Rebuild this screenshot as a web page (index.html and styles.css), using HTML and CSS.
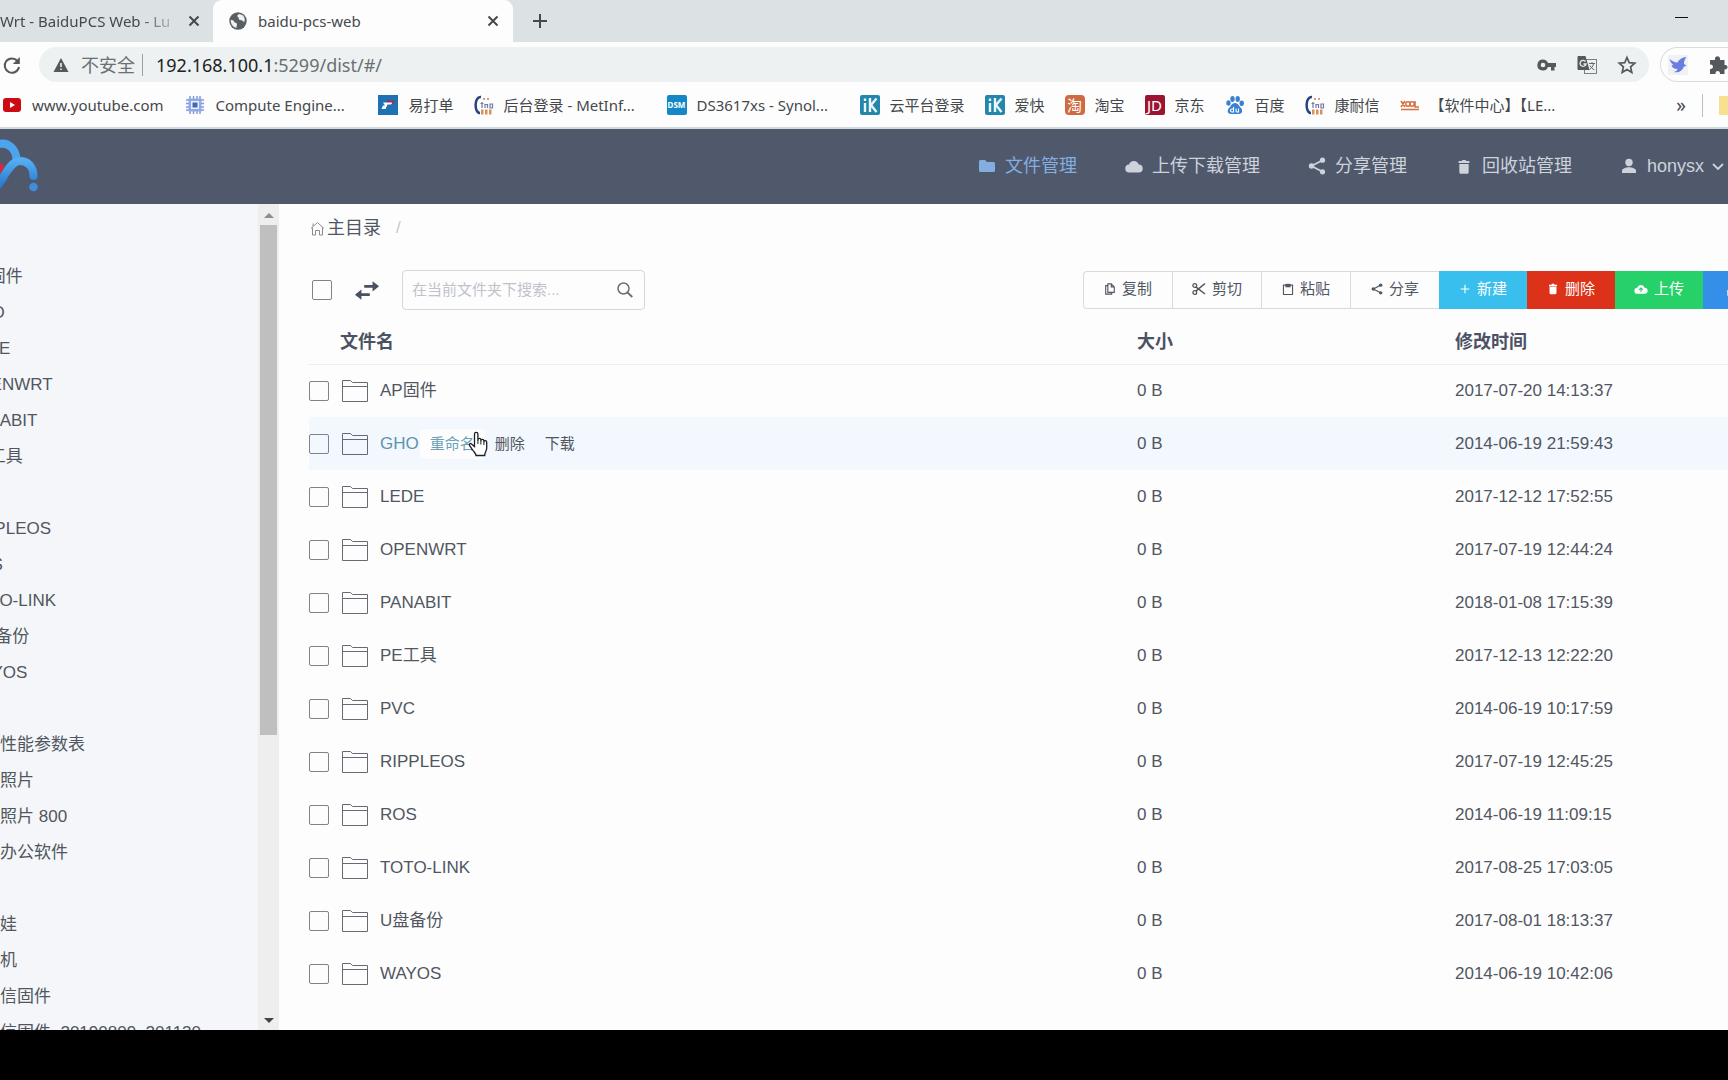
FILE: index.html
```html
<!DOCTYPE html>
<html lang="zh-CN">
<head>
<meta charset="utf-8">
<title>baidu-pcs-web</title>
<link rel="stylesheet" href="styles.css">
</head>
<body>
<svg class="sprite" aria-hidden="true">
  <symbol id="i-close" viewBox="0 0 12 12"><path d="M1.500 1.500l9 9M10.500 1.500l-9 9" stroke="currentColor" stroke-width="2" fill="none"/></symbol>
  <symbol id="i-folder-line" viewBox="0 0 28 24"><path d="M1.500 22.500V1.500h8l2 2h15v19zM1.500 7.500h25" fill="none" stroke="#666b73" stroke-width="1"/></symbol>
  <symbol id="i-share" viewBox="0 0 18 18"><path d="M15 3L3.500 9L15 15" stroke="currentColor" stroke-width="1.800" fill="none"/><circle cx="14.500" cy="3.200" r="2.600" fill="currentColor"/><circle cx="3.500" cy="9" r="2.700" fill="currentColor"/><circle cx="14.500" cy="14.800" r="2.600" fill="currentColor"/></symbol>
  <symbol id="i-trash" viewBox="0 0 18 18"><path d="M3 2.500h3.500l1-1.200h3l1 1.200H15v2.200H3zM3.800 5.700h10.400v9.300a1.700 1.700 0 0 1-1.700 1.700h-7a1.700 1.700 0 0 1-1.700-1.700z" fill="currentColor"/></symbol>
  <symbol id="i-c" viewBox="0 0 20 20"><path d="M7 2C0 1 0 18 6 18" fill="none" stroke="#27447e" stroke-width="2.500"/><path d="M6.500 8.500h3M8 7v6M11 13V9.500h2.500V13M16 9v4h2.500V9z" fill="none" stroke="#707ba6" stroke-width="1.200"/><path d="M7 14.500h2.500v5H7zM11 14.500h2.500v5H11zM15 14.500h2.500v5H15z" fill="#d7925c"/><circle cx="10" cy="4" r="1" fill="#d77a48"/><circle cx="14" cy="4" r="1" fill="#d77a48"/></symbol>
  <symbol id="i-ik" viewBox="0 0 20 20"><rect width="20" height="20" rx="2" fill="#2486ab"/><path d="M5 8v9M5 3.500v2.500M10 3v14M16.500 3.500L11 10l5.500 7" fill="none" stroke="#e9f7fb" stroke-width="2.400"/></symbol>
</svg>

<div class="browser">
  <div class="tabs">
    <div class="tab tab-back"><span class="tab-title">Wrt - BaiduPCS Web - Lu</span><button aria-label="关闭标签页"><svg width="12" height="12"><use href="#i-close"/></svg></button></div>
    <div class="tab tab-active">
      <svg width="18" height="18" viewBox="0 0 18 18"><circle cx="9" cy="9" r="8.700" fill="#5a5e63"/><path d="M1.800 8c3 0 3 1 3.500 2s2.700.500 2.700 2.300c0 1.500-.7 2-.5 3.600C4 15.500 1.500 12 1.800 8zM10 2c-2 1.600-2.400 2-1 3 1.500 1 0 2.500 2 3s3.200.500 4 2.500c1.800-3 .5-8-5-8.500z" fill="#eef1f2"/></svg>
      <span class="tab-title">baidu-pcs-web</span><button aria-label="关闭标签页"><svg width="12" height="12"><use href="#i-close"/></svg></button>
    </div>
    <button class="new-tab" aria-label="新标签页"><svg width="16" height="16" viewBox="0 0 16 16"><path d="M8 1v14M1 8h14" stroke="#45494d" stroke-width="2"/></svg></button>
    <button class="minimize" aria-label="最小化"></button>
  </div>

  <div class="toolbar">
    <button class="reload" aria-label="重新加载"><svg width="20" height="20" viewBox="0 0 20 20"><path d="M15.500 6A7.200 7.200 0 1 0 17 12" fill="none" stroke="#55595d" stroke-width="2"/><path d="M17.800 2v7h-7z" fill="#55595d"/></svg></button>
    <div class="address">
      <svg width="16" height="16" viewBox="0 0 16 16"><path d="M8 1l7.500 14H.5z" fill="#55595d"/><path d="M7.200 6h1.600v4H7.200zM7.200 11.500h1.600V13H7.200z" fill="#edf1f2"/></svg>
      <span class="insecure">不安全</span>
      <span class="url"><b>192.168.100.1</b>:5299/dist/#/</span>
      <svg class="key" width="20" height="20" viewBox="0 0 20 20"><path d="M6 4.500a5.500 5.500 0 1 0 5 7.500h3v3.500h3.500V12H19V8h-8a5.500 5.500 0 0 0-5-3.500zm0 3.200a2.300 2.300 0 1 1 0 4.600 2.300 2.300 0 0 1 0-4.600z" fill="#55595d"/></svg>
      <svg width="20" height="20" viewBox="0 0 20 20"><rect x="7.500" y="4.500" width="12" height="14" fill="none" stroke="#7b7f82"/><path d="M1.500 1h7l4 14h-11a1 1 0 0 1-1-1V2a1 1 0 0 1 1-1z" fill="#55595d"/><path d="M8.500 6.500A3 3 0 1 0 9 9H6.500" fill="none" stroke="#edf1f2" stroke-width="1.300"/><path d="M12 8.500h6M15 7v1.500M16.500 8.500c-.5 3-2 4.500-4 6M13 10.500c1 2 2.500 3.500 4.500 4.500" fill="none" stroke="#666a6e"/></svg>
      <svg width="20" height="20" viewBox="0 0 20 20"><path d="M10 2.500l2.200 5.200 5.600.5-4.200 3.700 1.200 5.500L10 14.500l-4.800 2.900 1.200-5.500-4.200-3.700 5.600-.5z" fill="none" stroke="#55595d" stroke-width="1.700"/></svg>
    </div>
    <div class="extensions">
      <svg width="20" height="20" viewBox="0 0 20 20"><rect width="20" height="20" fill="#f0f1f5"/><path d="M1.500 4c3 2.500 5 3.300 8 3.500C11 4 14 2.500 18.500 2 16.500 4.500 16 6.500 16 9l2.500 1.500L15.500 12c-1 4-5 6-9.500 5 2-.7 3.200-1.600 3.500-3C6 14 4 12.500 3.500 10l2 .2C3.500 8.500 2 6.500 1.500 4z" fill="#6c7de0"/></svg>
      <svg width="20" height="20" viewBox="0 0 20 20"><path d="M2 5h5c-1-5 6-5 5 0h4.500v5c4-1 4 5 0 4.500V19h-4.500c.5-4-5-4-4.500 0H2v-5c4 .5 4-5 0-4.500z" fill="#55595d"/></svg>
    </div>
  </div>

  <nav class="bookmarks" aria-label="书签">
    <a href="#"><svg width="20" height="20" viewBox="0 0 20 20"><rect x="1" y="3" width="18" height="14" rx="3" fill="#cb0a12"/><path d="M8 7l5 3-5 3z" fill="#fff"/></svg>www.youtube.com</a>
    <a href="#" class="long"><svg width="20" height="20" viewBox="0 0 20 20"><path d="M5 1v18M8.500 1v18M12 1v18M15 1v18M1 5h18M1 8.500h18M1 12h18M1 15h18" stroke="#7f95d6" stroke-width="1.400"/><rect x="3.500" y="3.500" width="13" height="13" fill="#8fa9ea"/><rect x="6" y="6" width="8" height="8" fill="#e8effc"/><rect x="7.500" y="7.500" width="5" height="5" fill="#4868a8"/></svg>Compute Engine...</a>
    <a href="#"><svg width="20" height="20" viewBox="0 0 20 20"><rect width="20" height="20" fill="#1e72b4"/><path d="M8 5.500h9l-2 4h-4z" fill="#9c2a50"/><path d="M5 7.500h9.500L13 9.500H9.500L7.500 14H3.500l1.500-3.500H7z" fill="#fff"/></svg>易打单</a>
    <a href="#" class="long"><svg width="20" height="20"><use href="#i-c"/></svg>后台登录 - MetInf...</a>
    <a href="#" class="long"><span class="badge dsm">DSM</span>DS3617xs - Synol...</a>
    <a href="#"><svg width="20" height="20"><use href="#i-ik"/></svg>云平台登录</a>
    <a href="#"><svg width="20" height="20"><use href="#i-ik"/></svg>爱快</a>
    <a href="#"><span class="badge tao">淘</span>淘宝</a>
    <a href="#"><span class="badge jd">JD</span>京东</a>
    <a href="#"><svg width="20" height="20" viewBox="0 0 20 20" fill="#3a80d2"><ellipse cx="3.500" cy="8" rx="2.200" ry="2.800"/><ellipse cx="7.500" cy="4" rx="2.200" ry="2.900"/><ellipse cx="12.700" cy="4" rx="2.200" ry="2.900"/><ellipse cx="16.700" cy="8.300" rx="2.200" ry="2.800"/><path d="M10 8c3 0 4 3 6 5 2.500 3 .5 6-2 6H6c-3 0-4.500-3-2-6 2-2 3-5 6-5z"/><path d="M8.500 12v5H7a1.500 1.500 0 0 1 0-3h1.500M11 13.500V16q0 1 1 1h1.500v-3.500" fill="none" stroke="#fff" stroke-width="1.100"/></svg>百度</a>
    <a href="#"><svg width="20" height="20"><use href="#i-c"/></svg>康耐信</a>
    <a href="#"><svg width="20" height="20" viewBox="0 0 20 20"><path d="M1 6l4 6M5 6l-4 6M15 6v6h4M1 14.500h18" fill="none" stroke="#d5703f" stroke-width="1.600" /><circle cx="8" cy="9" r="2.200" fill="none" stroke="#d5703f" stroke-width="1.500"/><circle cx="12" cy="9" r="2.200" fill="none" stroke="#d5703f" stroke-width="1.500"/></svg>【软件中心】【LE...</a>
    <button class="more" aria-label="更多书签">»</button>
    <span class="other"></span>
  </nav>

  <header class="header">
    <svg class="logo" width="40" height="60" viewBox="0 0 40 60">
      <defs><linearGradient id="g" x1="0" y1="0" x2="0" y2="1"><stop offset="0" stop-color="#52adf2"/><stop offset="1" stop-color="#2b79d0"/></linearGradient></defs>
      <path d="M0 28l5 3-5 8z" fill="#d02a45"/>
      <path d="M-3 9.500C8 6 17 14 16.500 27" fill="none" stroke="#4da4ee" stroke-width="8"/>
      <path d="M-3 51C3 46 9 26 20 26c8 0 13.500 6 13.500 15" fill="none" stroke="url(#g)" stroke-width="8" stroke-linecap="round"/>
      <circle cx="33.500" cy="52" r="4.300" fill="#3f8ddc"/>
    </svg>
    <nav class="menu">
      <a href="#" class="current"><svg width="18" height="18" viewBox="0 0 18 18"><path d="M1 4.500a1.500 1.500 0 0 1 1.500-1.500H7l2 2h6.500A1.500 1.500 0 0 1 17 6.500v7a1.500 1.500 0 0 1-1.500 1.500h-13A1.500 1.500 0 0 1 1 13.500z" fill="currentColor"/></svg>文件管理</a>
      <a href="#"><svg width="18" height="18" viewBox="0 0 18 18"><path d="M4.500 15.500a4 4 0 0 1-.4-8 5 5 0 0 1 9.600 0 4 4 0 0 1 0 8z" fill="currentColor"/></svg>上传下载管理</a>
      <a href="#"><svg width="18" height="18"><use href="#i-share"/></svg>分享管理</a>
      <a href="#"><svg width="18" height="18" viewBox="-1 -2 20 20"><use href="#i-trash" width="18" height="18"/></svg>回收站管理</a>
      <a href="#"><svg width="18" height="18" viewBox="0 0 18 18"><circle cx="9" cy="5.500" r="3.700" fill="currentColor"/><path d="M2 16v-2.500c0-2 4-3.300 7-3.300s7 1.300 7 3.300V16z" fill="currentColor"/></svg><span class="user">honysx</span><svg class="caret" width="12" height="12" viewBox="0 0 12 12"><path d="M1 4l5 5 5-5" fill="none" stroke="currentColor" stroke-width="1.800"/></svg></a>
    </nav>
  </header>

  <div class="content">
    <aside class="sidebar">
      <ul class="tree">
        <li>AP固件</li><li>GHO</li><li>LEDE</li><li>OPENWRT</li><li>PANABIT</li><li>PE工具</li><li></li><li>RIPPLEOS</li><li>ROS</li><li>TOTO-LINK</li><li>U盘备份</li><li>WAYOS</li><li></li>
        <li class="inner">性能参数表</li><li class="inner">照片</li><li class="inner">照片 800</li><li class="inner">办公软件</li><li></li><li class="inner">娃</li><li class="inner">机</li><li class="inner">信固件</li><li class="inner">信固件_20190809_201130</li>
      </ul>
      <div class="scrollbar"><i class="up"></i><i class="thumb"></i><i class="down"></i></div>
    </aside>

    <main class="main">
      <div class="crumbs"><a href="#"><svg width="15" height="15" viewBox="0 0 15 15"><path d="M1 7.500L7.500 1.500 14 7.500M2.500 6.500v7.500h3V9.500h4V14h3V6.500M3 5V2.500" fill="none" stroke="#888d94"/></svg>主目录</a><span>/</span></div>
      <div class="actions">
        <input type="checkbox" aria-label="全选">
        <svg class="swap" width="26" height="19" viewBox="0 0 28 20"><path d="M11 4h9V0l7 5.500-7 5.500V7h-9zM17 13H8V9l-7 5.500L8 20v-4h9z" fill="#495060"/></svg>
        <div class="search"><input type="text" placeholder="在当前文件夹下搜索..." aria-label="搜索"><svg width="16" height="16" viewBox="0 0 16 16"><circle cx="6.500" cy="6.500" r="5.500" fill="none" stroke="#6b7078" stroke-width="1.500"/><path d="M10.500 10.500l4.800 4.500" stroke="#6b7078" stroke-width="1.800"/></svg></div>
        <div class="group">
          <button class="plain"><svg width="12" height="12" viewBox="0 0 14 14"><path d="M4.500 1h4l3.500 3.500V11H4.500zM8.500 1v3.500H12M4.500 3H2v10h7v-2" fill="none" stroke="currentColor" stroke-width="1.300"/></svg>复制</button>
          <button class="plain"><svg width="14" height="14" viewBox="0 0 14 14"><path d="M3.800 4.800L13 12M3.800 9.200L13 1.500" stroke="currentColor" stroke-width="1.500"/><circle cx="2.800" cy="3.500" r="1.900" fill="none" stroke="currentColor" stroke-width="1.300"/><circle cx="2.800" cy="10.500" r="1.900" fill="none" stroke="currentColor" stroke-width="1.300"/></svg>剪切</button>
          <button class="plain"><svg width="12" height="12" viewBox="0 0 14 14"><path d="M1.700 2.500h10.600v11H1.700z" fill="none" stroke="currentColor" stroke-width="1.300"/><path d="M4 1h6v4H4z" fill="currentColor"/></svg>粘贴</button>
          <button class="plain"><svg width="12" height="12"><use href="#i-share"/></svg>分享</button>
          <button class="new"><svg width="12" height="12" viewBox="0 0 14 14"><path d="M7 2v10M2 7h10" stroke="currentColor" stroke-width="1.300"/></svg>新建</button>
          <button class="delete"><svg width="12" height="12"><use href="#i-trash"/></svg>删除</button>
          <button class="upload"><svg width="14" height="12" viewBox="0 0 16 14"><path d="M4 12.500a3.500 3.500 0 0 1-.4-7 4.500 4.500 0 0 1 8.600 0 3.500 3.500 0 0 1 0 7z" fill="currentColor"/><path d="M8 10.500V6M5.800 8L8 5.800 10.200 8" fill="none" stroke="#27ce68" stroke-width="1.300"/></svg>上传</button>
          <button class="download" aria-label="下载"><svg width="40" height="14" viewBox="0 0 40 14"><path d="M7 1v8M4 6l3 3 3-3M1 8v5h12V8" fill="none" stroke="currentColor" stroke-width="1.300"/></svg></button>
        </div>
      </div>

      <table class="files">
        <colgroup><col><col class="c-size"><col class="c-time"></colgroup>
        <thead><tr><th class="name-head">文件名</th><th>大小</th><th>修改时间</th></tr></thead>
        <tbody>
          <tr><td><div class="file"><input type="checkbox" aria-label="AP固件"><svg width="28" height="24"><use href="#i-folder-line"/></svg><a href="#">AP固件</a></div></td><td>0 B</td><td>2017-07-20 14:13:37</td></tr>
          <tr class="hover"><td><div class="file"><input type="checkbox" aria-label="GHO"><svg width="28" height="24"><use href="#i-folder-line"/></svg><a href="#">GHO</a><div class="row-actions"><button class="active">重命名<svg class="cursor" width="20" height="26" viewBox="0 0 20 26"><path d="M6.500 15.500V3a1.700 1.700 0 0 1 3.400 0v6.500V8.800a1.500 1.500 0 0 1 3 0v1.400-.4a1.500 1.500 0 0 1 3 0v1.500-.3a1.400 1.400 0 0 1 2.800 0V17c0 3-2 4-2 7.500H8c0-2-2-3.500-3.300-5.500L1.500 14.500c-.8-1.500.8-2.600 2-1.500z" fill="#fff" stroke="#1d2024" stroke-width="1.300"/><path d="M9.900 9v4M12.900 10v3.500M15.900 11v3" stroke="#1d2024"/></svg></button><button>删除</button><button>下载</button></div></div></td><td>0 B</td><td>2014-06-19 21:59:43</td></tr>
          <tr><td><div class="file"><input type="checkbox" aria-label="LEDE"><svg width="28" height="24"><use href="#i-folder-line"/></svg><a href="#">LEDE</a></div></td><td>0 B</td><td>2017-12-12 17:52:55</td></tr>
          <tr><td><div class="file"><input type="checkbox" aria-label="OPENWRT"><svg width="28" height="24"><use href="#i-folder-line"/></svg><a href="#">OPENWRT</a></div></td><td>0 B</td><td>2017-07-19 12:44:24</td></tr>
          <tr><td><div class="file"><input type="checkbox" aria-label="PANABIT"><svg width="28" height="24"><use href="#i-folder-line"/></svg><a href="#">PANABIT</a></div></td><td>0 B</td><td>2018-01-08 17:15:39</td></tr>
          <tr><td><div class="file"><input type="checkbox" aria-label="PE工具"><svg width="28" height="24"><use href="#i-folder-line"/></svg><a href="#">PE工具</a></div></td><td>0 B</td><td>2017-12-13 12:22:20</td></tr>
          <tr><td><div class="file"><input type="checkbox" aria-label="PVC"><svg width="28" height="24"><use href="#i-folder-line"/></svg><a href="#">PVC</a></div></td><td>0 B</td><td>2014-06-19 10:17:59</td></tr>
          <tr><td><div class="file"><input type="checkbox" aria-label="RIPPLEOS"><svg width="28" height="24"><use href="#i-folder-line"/></svg><a href="#">RIPPLEOS</a></div></td><td>0 B</td><td>2017-07-19 12:45:25</td></tr>
          <tr><td><div class="file"><input type="checkbox" aria-label="ROS"><svg width="28" height="24"><use href="#i-folder-line"/></svg><a href="#">ROS</a></div></td><td>0 B</td><td>2014-06-19 11:09:15</td></tr>
          <tr><td><div class="file"><input type="checkbox" aria-label="TOTO-LINK"><svg width="28" height="24"><use href="#i-folder-line"/></svg><a href="#">TOTO-LINK</a></div></td><td>0 B</td><td>2017-08-25 17:03:05</td></tr>
          <tr><td><div class="file"><input type="checkbox" aria-label="U盘备份"><svg width="28" height="24"><use href="#i-folder-line"/></svg><a href="#">U盘备份</a></div></td><td>0 B</td><td>2017-08-01 18:13:37</td></tr>
          <tr><td><div class="file"><input type="checkbox" aria-label="WAYOS"><svg width="28" height="24"><use href="#i-folder-line"/></svg><a href="#">WAYOS</a></div></td><td>0 B</td><td>2014-06-19 10:42:06</td></tr>
        </tbody>
      </table>
    </main>
  </div>
</div>
</body>
</html>
```
FILE: styles.css
```css
* { box-sizing: border-box; }
body {
  margin: 0;
  height: 100vh;
  padding-bottom: 50px;
  overflow: hidden;
  background: #000;
  color: #51565f;
  font: 17px/24px "Liberation Sans", "Noto Sans CJK SC", sans-serif;
}
a { color: inherit; text-decoration: none; }
button { margin: 0; padding: 0; border: 0; background: none; color: inherit; font: inherit; }
svg { display: block; flex: none; }
.sprite { position: absolute; width: 0; height: 0; }

.browser { display: flex; flex-direction: column; height: 100%; background: #fdfdfe; }
.tabs, .toolbar, .bookmarks { flex: none; display: flex; align-items: center; font-family: "Noto Sans", "Noto Sans CJK SC", sans-serif; }

/* tab strip */
.tabs { height: 42px; background: #dce1e4; color: #45494d; font-size: 15px; }
.tab { display: flex; align-items: center; height: 42px; }
.tab-title { flex: 1; overflow: hidden; white-space: nowrap; }
.tab-back { width: 213px; padding-right: 13px; gap: 8px; }
.tab-back .tab-title { mask-image: linear-gradient(to right, #000 140px, transparent 182px); }
.tab-active { width: 300px; padding: 0 14px 0 16px; gap: 11px; background: #fdfdfe; border-radius: 9px 9px 0 0; }
.new-tab { margin-left: 19px; }
.minimize { width: 13px; height: 1px; margin: 0 40px 7px auto; background: #111; }

/* address row */
.toolbar { height: 45px; }
.reload { width: 39px; padding-left: 2px; }
.address { flex: 1; display: flex; align-items: center; height: 35px; padding: 0 12px 0 14px; border-radius: 18px; background: #edf1f2; font-size: 18px; }
.insecure { margin-left: 12px; padding-right: 7px; border-right: 1px solid #9da1a4; line-height: 22px; color: #6b6f73; }
.url { flex: 1; margin-left: 13px; font-size: 18px; color: #6b6f73; }
.url b { font-weight: 400; color: #222; }
.address svg + svg { margin-left: 20px; }
.extensions { display: flex; align-items: center; gap: 20px; height: 35px; margin-left: 11px; padding-left: 7px; border: 1px solid #d9dcde; border-right: 0; border-radius: 18px 0 0 18px; }

/* bookmarks */
.bookmarks { height: 42px; padding: 0 0 4px 2px; gap: 20px; border-bottom: 2px solid #d3dadf; font-size: 15px; color: #45484b; overflow: hidden; }
.bookmarks a { flex: none; display: flex; align-items: center; gap: 10px; white-space: nowrap; }
.bookmarks a:first-child { margin-right: 2px; }
.bookmarks .long { width: 173px; }
.badge { width: 20px; height: 20px; border-radius: 2px; color: #fff; text-align: center; line-height: 20px; }
.dsm { background: #1488c6; font-size: 8px; font-weight: 700; }
.tao { background: #cf6a42; font-size: 15px; border-radius: 4px; }
.jd { background: #9c1431; font-size: 15px; }
.more { margin-left: auto; font-size: 19px; }
.other { width: 26px; height: 23px; margin-left: -4px; border-left: 1px solid #b9bec2; background: linear-gradient(#f7e08e, #f7e08e) right / 9px 19px no-repeat; }

/* application header */
.header { flex: none; display: flex; justify-content: space-between; height: 75px; background: #50596c; }
.logo { margin-top: 6px; }
.menu { display: flex; gap: 48px; padding: 25px 4px 26px 0; font-size: 18px; color: #cdd2db; }
.menu a { display: flex; align-items: center; gap: 9px; }
.menu .current { color: #84aee0; }
.menu .caret { margin-left: -1px; }

.content { flex: 1; display: flex; min-height: 0; }

/* folder tree */
.sidebar { flex: none; display: flex; width: 279px; background: #f4f6f9; overflow: hidden; }
.tree { flex: 1; margin: 0; padding: 55px 0 0; list-style: none; overflow: hidden; }
.tree li { height: 36px; margin-left: -34px; line-height: 36px; white-space: nowrap; }
.tree .inner { margin-left: 0; }
.scrollbar { display: flex; flex-direction: column; align-items: center; width: 21px; padding: 9px 0 7px; background: #eee; }
.up, .down { border: 5px solid transparent; border-top: 0; border-bottom-color: #8e8e8e; }
.down { margin-top: auto; border-top: 5px solid #444; border-bottom: 0; }
.thumb { width: 17px; height: 63%; margin-top: 7px; background: #bfbfbf; }

/* file list */
.main { flex: 1; min-width: 0; padding: 12px 0 0 30px; overflow: hidden; }
.crumbs { display: flex; gap: 15px; }
.crumbs a { display: flex; align-items: center; gap: 2px; padding-left: 1px; font-size: 18px; }
.crumbs span { color: #c5c8ce; }
input[type="checkbox"] { appearance: none; flex: none; width: 20px; height: 20px; margin: 0; border: 1px solid #7f848b; border-radius: 2px; background: #fdfdfe; }
.actions { display: flex; align-items: center; height: 40px; margin-top: 30px; padding-left: 3px; }
.swap { margin: 0 22px; }
.search { display: flex; align-items: center; width: 243px; height: 40px; padding: 0 11px 0 9px; border: 1px solid #d4d7dc; border-radius: 4px; }
.search input { flex: 1; min-width: 0; padding: 0; border: 0; outline: 0; background: none; font: inherit; font-size: 15px; }
.search input::placeholder { color: #bfc3c9; }
.group { display: flex; margin: 0 -63px 0 auto; font-size: 15px; }
.group button { display: flex; align-items: center; justify-content: center; gap: 6px; width: 88px; height: 38px; padding-bottom: 2px; color: #fff; }
.group .plain { width: 89px; border: 1px solid #d7dade; border-right: 0; color: #51565f; }
.group .plain:first-child { border-radius: 4px 0 0 4px; }
.group .new { background: #38bfee; }
.group .delete { background: #dc3219; }
.group .upload { background: #27d16a; }
.group .download { background: #338fe8; }

.files { width: 100%; table-layout: fixed; border-collapse: collapse; }
.c-size { width: 318px; }
.c-time { width: 273px; }
.files th { height: 54px; padding: 11px 0 0; border-bottom: 1px solid #edf0f2; text-align: left; font-size: 18px; color: #4c5263; }
.files .name-head { padding-left: 31px; }
.files td { height: 53px; padding: 0; }
.hover { background: #f2f8fd; }
.hover input[type="checkbox"] { background: none; }
.hover .file > a { color: #5b93ae; }
.file { display: flex; align-items: center; }
.file > svg { margin: 0 11px 0 12px; }
.row-actions { display: flex; margin-left: 1px; font-size: 15px; }
.row-actions button { position: relative; height: 30px; padding: 0 10px; border-radius: 4px; }
.row-actions .active { background: #fdfdfe; color: #6aa1b8; }
.cursor { position: absolute; left: 48px; top: 2px; }
```
